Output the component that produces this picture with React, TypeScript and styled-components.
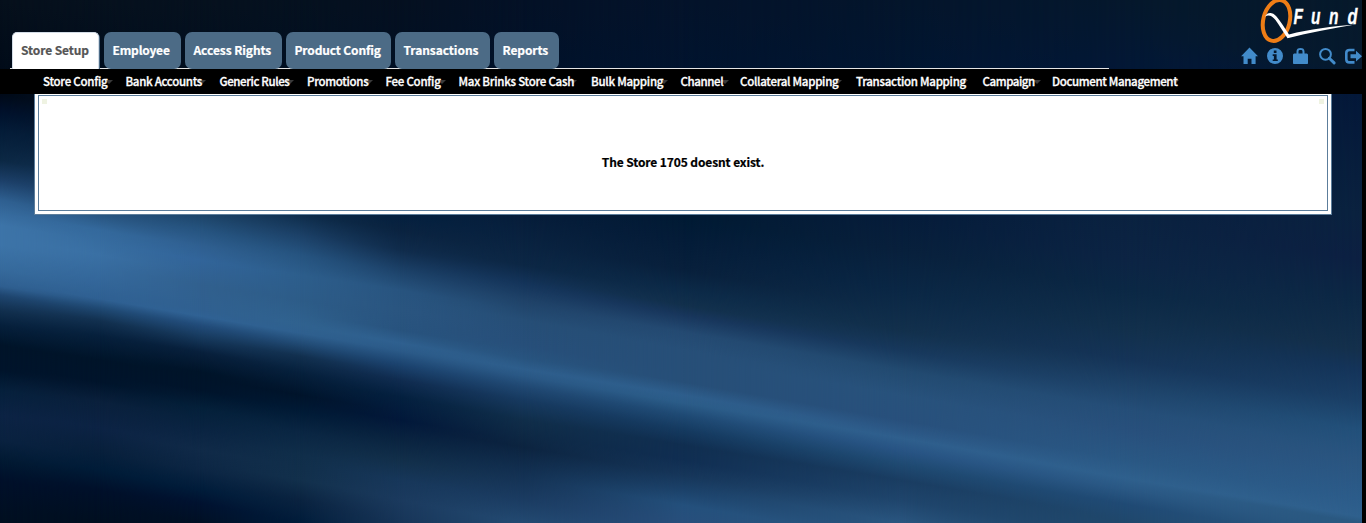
import React from 'react';
import styled, { createGlobalStyle } from 'styled-components';

const GlobalStyle = createGlobalStyle`
  * { box-sizing: border-box; }
  html, body { margin: 0; padding: 0; background: #000; }
  body { overflow: hidden; }
`;

const face = '"Noto Sans CJK SC", "Open Sans", sans-serif';

const Page = styled.div`
  position: relative;
  height: 523px;
  width: 1366px;
  overflow: hidden;
  background: #000;
  font-family: ${face};
`;

const Wallpaper = styled.svg`
  position: absolute;
  inset: 0 auto auto 0;
  display: block;
`;

const Content = styled.div`
  position: relative;
  width: 1362px;
  display: flex;
  flex-direction: column;
`;

const Header = styled.header`
  height: 69px;
  display: flex;
  justify-content: space-between;
`;

const TabBar = styled.nav`
  width: 1099px;
  height: 37px;
  margin: 32px 0 0 10px;
  padding-left: 2px;
  display: flex;
  border-bottom: 1px solid #e4e4e4;
`;

const Tab = styled.a<{ $width: number; $gap: number; $active?: boolean; $track?: number }>`
  flex: none;
  width: ${p => p.$width}px;
  height: 37px;
  margin-right: ${p => p.$gap}px;
  padding-left: ${p => (p.$active ? 8 : 8.5)}px;
  border-radius: ${p => (p.$active ? '5px 5px 0 0' : '7px')};
  border: ${p => (p.$active ? '1px solid #d3dce6' : '0')};
  border-bottom: 0;
  background: ${p => (p.$active ? '#fff' : '#4c6b86')};
  box-shadow: ${p => (p.$active ? '1px 1px 0 #4c6b86' : 'none')};
  color: ${p => (p.$active ? '#555' : '#fff')};
  font-size: 12px;
  font-weight: 700;
  -webkit-text-stroke: 0.2px;
  line-height: ${p => (p.$active ? 33 : 35)}px;
  letter-spacing: ${p => p.$track ?? 0}px;
  white-space: nowrap;
`;

const Brand = styled.div`
  width: 122px;
  display: flex;
  flex-direction: column;
`;

const IconRow = styled.div`
  display: flex;
  gap: 8px;
  margin-top: 3px;
`;

const Menu = styled.nav`
  height: 25px;
  padding-left: 43px;
  display: flex;
  background: #000;
`;

const MenuItem = styled.a<{ $width: number; $track: number }>`
  position: relative;
  flex: none;
  width: ${p => p.$width}px;
  color: #fff;
  font-size: 11.5px;
  font-weight: 500;
  -webkit-text-stroke: 0.3px;
  line-height: 24px;
  letter-spacing: ${p => p.$track}px;
  white-space: nowrap;
`;

const Label = styled.span`
  position: relative;
`;

const Caret = styled.i<{ $end: number }>`
  position: absolute;
  top: 11px;
  left: ${p => p.$end - 8}px;
  border: 4px solid transparent;
  border-top-color: #3a3a3a;
  border-bottom: 0;
`;

const Panel = styled.main`
  width: 1298px;
  height: 121px;
  margin-left: 34px;
  padding: 1px 3px 3px;
  background: #fff;
  border: 1px solid #5c7d9b;
  border-top: 0;
`;

const Frame = styled.section`
  height: 116px;
  padding: 3px;
  border: 1px solid #5c7d9b;
  display: flex;
  justify-content: space-between;
`;

const Corner = styled.span`
  width: 5px;
  height: 5px;
  background: #eff3e2;
`;

const Message = styled.p`
  margin: 0;
  padding-top: 53px;
  color: #000;
  font-size: 12px;
  line-height: 20px;
  font-weight: 700;
  letter-spacing: -0.11px;
  -webkit-text-stroke: 0.2px;
`;

type Stops = [number, string][];
const SLOPE = 0.17;
const TOP = -240;
const BOTTOM = 540;

// Colour down the wallpaper at a few x positions; blended across, along the slope of the folds.
const columns: { x: number; stops: Stops }[] = [
  { x: 0, stops: [[0, '#06101c'], [94, '#000a18'], [110, '#00102a'], [130, '#041c38'], [160, '#0c2844'], [180, '#1c3f68'], [200, '#2f6091'], [225, '#3d74a8'], [245, '#3d74a8'], [270, '#366a9c'], [286, '#2f5f90'], [295, '#1f4670'], [310, '#12304f'], [325, '#06203c'], [345, '#001429'], [370, '#00142b'], [390, '#06203c'], [415, '#0c2344'], [440, '#0a2240'], [460, '#021a33'], [480, '#00102a'], [523, '#000f20']] },
  { x: 100, stops: [[0, '#06111e'], [94, '#000c1c'], [160, '#0a2440'], [190, '#183c62'], [214, '#28547f'], [230, '#34699c'], [255, '#3a70a4'], [280, '#34679a'], [299, '#2f6092'], [308, '#204a74'], [321, '#12304f'], [336, '#06203c'], [360, '#001429'], [382, '#00142b'], [402, '#0a203c'], [428, '#0c2344'], [450, '#08203c'], [470, '#001c38'], [490, '#00102a'], [523, '#000f20']] },
  { x: 200, stops: [[0, '#06111e'], [94, '#000e20'], [180, '#0c2a48'], [214, '#1d4468'], [230, '#265480'], [245, '#2f5f90'], [260, '#32659a'], [285, '#31608e'], [310, '#306090'], [316, '#306294'], [325, '#224c7a'], [337, '#173a5e'], [352, '#08203c'], [372, '#001429'], [390, '#00142b'], [408, '#04203a'], [430, '#0a2442'], [450, '#102a48'], [470, '#0c2644'], [490, '#001c3a'], [503, '#001230'], [523, '#001024']] },
  { x: 300, stops: [[0, '#05111f'], [94, '#000f23'], [190, '#04203c'], [214, '#0e2c4a'], [235, '#1c4168'], [255, '#265480'], [275, '#2d5e8c'], [300, '#2d5c88'], [324, '#30628f'], [333, '#2f608f'], [343, '#224c76'], [356, '#12304f'], [373, '#06203c'], [395, '#00142b'], [410, '#001a35'], [432, '#0a2643'], [455, '#102e4a'], [480, '#12304c'], [500, '#0a2340'], [523, '#001c3a']] },
  { x: 400, stops: [[0, '#051020'], [94, '#001026'], [214, '#04203f'], [230, '#0a2340'], [250, '#102c4c'], [270, '#1c4168'], [290, '#28547f'], [310, '#2a5580'], [330, '#28537e'], [343, '#2f608f'], [351, '#2b5a88'], [364, '#1c4470'], [380, '#102c50'], [397, '#04203f'], [420, '#02183a'], [440, '#0a2440'], [460, '#122f4a'], [480, '#17375a'], [500, '#1b3a5e'], [523, '#173558']] },
  { x: 523, stops: [[0, '#041126'], [94, '#00122b'], [214, '#061d3a'], [265, '#0c2745'], [283, '#14345a'], [300, '#1f4268'], [320, '#264e76'], [345, '#274f7a'], [358, '#28547f'], [369, '#2e5e8c'], [376, '#2a5885'], [387, '#204872'], [400, '#173a60'], [420, '#102e4a'], [447, '#0c2440'], [470, '#122f50'], [500, '#1b3c62'], [523, '#234a72']] },
  { x: 683, stops: [[0, '#04132a'], [94, '#001430'], [214, '#001a33'], [240, '#041c38'], [270, '#08203c'], [290, '#0c2a48'], [305, '#12304c'], [315, '#18365c'], [332, '#244a72'], [350, '#274f78'], [382, '#274f78'], [395, '#2e5e8c'], [403, '#2b5c88'], [415, '#1f4a74'], [430, '#153a60'], [445, '#102e50'], [460, '#102e52'], [475, '#16365a'], [490, '#1c426a'], [505, '#24507c'], [523, '#284f7c']] },
  { x: 900, stops: [[0, '#04152b'], [94, '#001633'], [214, '#051c3a'], [250, '#08203c'], [290, '#0a2745'], [330, '#12304c'], [350, '#17385c'], [370, '#224a70'], [395, '#28527c'], [420, '#28507c'], [431, '#2c5886'], [438, '#2f5f8d'], [450, '#285484'], [464, '#1f4a72'], [480, '#1a3d62'], [500, '#1f456c'], [523, '#2a5680']] },
  { x: 1130, stops: [[0, '#05182c'], [94, '#02183a'], [214, '#0a2240'], [260, '#0c2444'], [290, '#0b2845'], [330, '#12304c'], [360, '#153458'], [385, '#1d4268'], [410, '#254e78'], [430, '#28507c'], [460, '#2a5884'], [479, '#2f608d'], [490, '#2a5884'], [505, '#204a74'], [523, '#20486c']] },
  { x: 1362, stops: [[0, '#06192b'], [70, '#061a2e'], [94, '#031839'], [214, '#0a223f'], [260, '#0c2042'], [300, '#0c2845'], [350, '#14304c'], [370, '#14345a'], [400, '#1a3f66'], [430, '#22507a'], [460, '#2a5580'], [500, '#2c5c8a'], [517, '#2f608d'], [523, '#2a5880']] },
];

function Backdrop() {
  return (
    <Wallpaper width="1362" height="523" viewBox="0 0 1362 523" aria-hidden="true">
      <defs>
        {columns.map((c, i) => (
          <React.Fragment key={c.x}>
            <linearGradient id={`col${i}`} gradientUnits="userSpaceOnUse" x1="0" x2="0" y1={TOP} y2={BOTTOM}>
              {c.stops.map(([y, color]) => (
                <stop key={y} offset={(y - c.x * SLOPE - TOP) / (BOTTOM - TOP)} stopColor={color} />
              ))}
            </linearGradient>
            {i > 0 && (
              <>
                <linearGradient id={`fade${i}`} gradientUnits="userSpaceOnUse" x1={columns[i - 1].x} x2={c.x} y1="0" y2="0">
                  <stop offset="0" stopColor="#fff" stopOpacity="0" />
                  <stop offset="1" stopColor="#fff" />
                </linearGradient>
                <mask id={`mask${i}`} maskUnits="userSpaceOnUse" x="0" y={TOP} width="1362" height={BOTTOM - TOP}>
                  <rect x={columns[i - 1].x} y={TOP} width="1362" height={BOTTOM - TOP} fill={`url(#fade${i})`} />
                </mask>
              </>
            )}
          </React.Fragment>
        ))}
      </defs>
      <g transform={`matrix(1 ${SLOPE} 0 1 0 0)`}>
        {columns.map((c, i) => (
          <rect key={c.x} x="0" y={TOP} width="1362" height={BOTTOM - TOP} fill={`url(#col${i})`} mask={i ? `url(#mask${i})` : undefined} />
        ))}
      </g>
    </Wallpaper>
  );
}

function Logo() {
  return (
    <svg width="122" height="44" viewBox="1240 0 122 44" role="img" aria-label="QFund">
      <ellipse cx="1276.500" cy="20.500" rx="13.200" ry="20.800" transform="rotate(14 1276.500 20.500)" fill="none" stroke="#ee7d16" strokeWidth="4" />
      <path d="M1265 16.500C1267.500 11.800 1272.500 12 1276.500 16.500C1281 22 1285 28.500 1289 34.600C1309 29.300 1333 26.300 1355 24.600C1333 28.600 1309 33 1287.500 38.200C1283 31.500 1279.500 25.500 1275.500 20C1272 15.500 1268.500 14.300 1265 16.500Z" fill="#fff" />
      <g fill="#fff" stroke="#fff" strokeWidth=".3" fontFamily="Liberation Sans, sans-serif" fontWeight="700" fontStyle="italic" fontSize="21.500">
        <text transform="translate(1293.500 23.800) scale(.72 1)">F</text>
        <text transform="translate(1311 23.800) scale(.72 1)">u</text>
        <text transform="translate(1329 23.800) scale(.72 1)">n</text>
        <text transform="translate(1347.500 23.800) scale(.76 1)">d</text>
      </g>
    </svg>
  );
}

const Glyph = ({ children }: { children: React.ReactNode }) => (
  <svg width="18" height="18" viewBox="0 0 18 18" fill="#428bca">{children}</svg>
);

function Icons() {
  return (
    <IconRow>
      <Glyph><path d="M9.500 .6 18 9.300H15.600V17H11.500V11.700H7.700V17H3.500V9.300H1.100Z" /></Glyph>
      <Glyph>
        <path fillRule="evenodd" d="M9 1a8 8 0 1 0 0 16A8 8 0 0 0 9 1ZM7.800 3.600h2.700v2.300H7.800ZM6.700 7.300h3.900v5.200h1.200v1.600H6.700v-1.600h1.200V8.900H6.700Z" />
      </Glyph>
      <Glyph>
        <path fillRule="evenodd" d="M4.500 6.500V4.500C4.500 2 6 1 8.500 1S12.500 2 12.500 4.500V6.500H15L16 7.500V16.200Q16 17 15.200 17H1.800Q1 17 1 16.200V7.500L2 6.500ZM6.500 6.500h4V4.500C10.500 3.400 9.800 3 8.500 3S6.500 3.400 6.500 4.500Z" />
      </Glyph>
      <Glyph>
        <circle cx="7.500" cy="7.300" r="5.400" fill="none" stroke="#428bca" strokeWidth="2" />
        <path d="m11.300 11.200 4.800 4.700" stroke="#428bca" strokeWidth="2.900" strokeLinecap="round" />
      </Glyph>
      <Glyph>
        <path d="M10.500 3H5.500Q2.300 3 2.300 6V12.200Q2.300 15.400 5.500 15.400H10.500" fill="none" stroke="#428bca" strokeWidth="2.600" />
        <path d="M6.500 7.300H12V3.800L18 9.200 12 14.600V11.200H6.500Z" />
      </Glyph>
    </IconRow>
  );
}

const tabs = [
  { label: 'Store Setup', width: 87, gap: 5, track: -0.1, active: true },
  { label: 'Employee', width: 77, gap: 4, track: -0.18 },
  { label: 'Access Rights', width: 97, gap: 4, track: -0.08 },
  { label: 'Product Config', width: 105, gap: 4, track: -0.14 },
  { label: 'Transactions', width: 95, gap: 4, track: -0.06 },
  { label: 'Reports', width: 65, gap: 0, track: -0.1 },
];

const menu = [
  { label: 'Store Config', width: 82.5, caret: 70, track: -0.25 },
  { label: 'Bank Accounts', width: 94, caret: 80, track: -0.3 },
  { label: 'Generic Rules', width: 87.5, caret: 74, track: -0.38 },
  { label: 'Promotions', width: 78.5, caret: 66, track: -0.3 },
  { label: 'Fee Config', width: 73, caret: 60, track: -0.25 },
  { label: 'Max Brinks Store Cash', width: 132.5, caret: 118, track: -0.25 },
  { label: 'Bulk Mapping', width: 89.5, caret: 77, track: -0.25 },
  { label: 'Channel', width: 59.5, caret: 48, track: -0.4 },
  { label: 'Collateral Mapping', width: 116, caret: 102, track: -0.28 },
  { label: 'Transaction Mapping', width: 126.5, caret: 112, track: -0.27 },
  { label: 'Campaign', width: 69.5, caret: 58, track: -0.42 },
  { label: 'Document Management', width: 130, caret: 127, track: -0.34 },
];

export default function App() {
  return (
    <Page>
      <GlobalStyle />
      <Backdrop />
      <Content>
        <Header>
          <TabBar>
            {tabs.map(t => (
              <Tab key={t.label} $width={t.width} $gap={t.gap} $track={t.track} $active={t.active}>{t.label}</Tab>
            ))}
          </TabBar>
          <Brand>
            <Logo />
            <Icons />
          </Brand>
        </Header>
        <Menu>
          {menu.map(m => (
            <MenuItem key={m.label} $width={m.width} $track={m.track}>
              <Caret $end={m.caret} />
              <Label>{m.label}</Label>
            </MenuItem>
          ))}
        </Menu>
        <Panel>
          <Frame>
            <Corner />
            <Message>The Store 1705 doesnt exist.</Message>
            <Corner />
          </Frame>
        </Panel>
      </Content>
    </Page>
  );
}
